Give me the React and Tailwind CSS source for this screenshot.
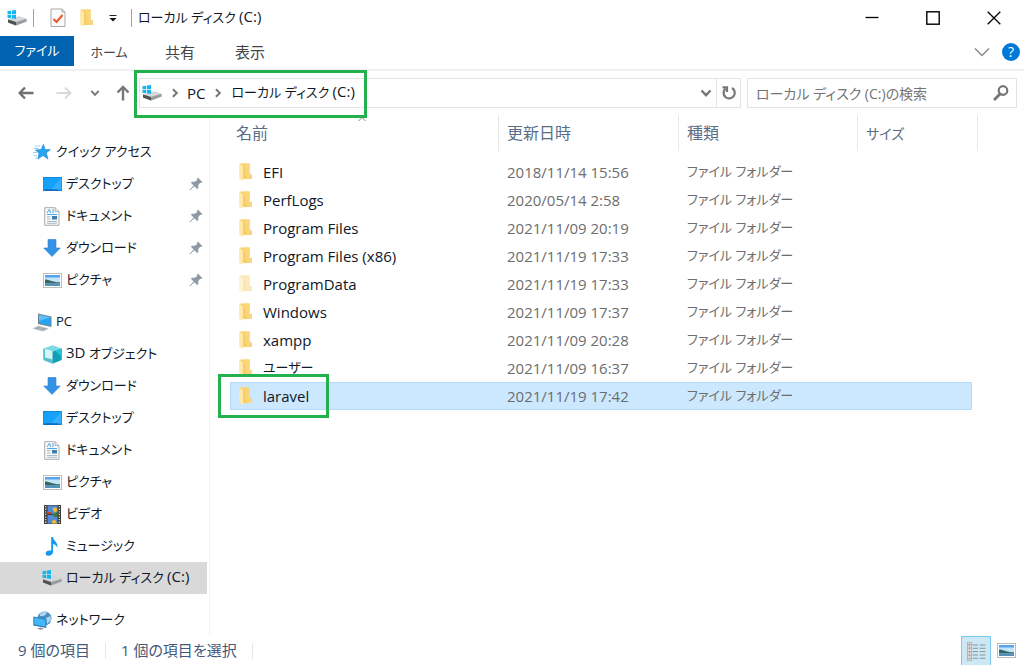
import React from 'react';

const DriveIcon = () => (
  <svg className="w-5 h-4 shrink-0" viewBox="0 0 20 16">
    <path d="M1 9.5 L12 6.5 L19.5 9 L19.5 11.5 L9 15.5 L1 12.5 Z" fill="#a9abad" />
    <path d="M1 9.5 L12 6.5 L19.5 9 L9 12 Z" fill="#d6d8da" />
    <path d="M1 9.5 L9 12 L9 15.5 L1 12.5 Z" fill="#4f5254" />
    <path d="M9 12 L19.5 9 L19.5 11.5 L9 15.5 Z" fill="#9a9da0" />
    <path d="M0.5 1.2 L4 0.7 V4 H0.5 Z M4.8 0.6 L9 0 V4 H4.8 Z M0.5 4.8 H4 V8.2 L0.5 7.7 Z M4.8 4.8 H9 V9 L4.8 8.3 Z" fill="#12b5ef" />
  </svg>
);

const FolderIcon = ({ faded }) => (
  <svg className={`w-[13px] h-[18px] shrink-0 ${faded ? 'opacity-50' : ''}`} viewBox="0 0 13 18">
    <path d="M1 0.5 H10.5 V11 H12.8 V16 H1 Z" fill="#f6cf6c" />
    <path d="M5 0.5 H10.5 V11 H12.8 V16 H8 Z" fill="#fad678" />
    <path d="M0.2 0.8 L4 3 V18 L0.2 15.8 Z" fill="#ffe8a8" />
  </svg>
);

const CheckDocIcon = () => (
  <svg className="w-4 h-5" viewBox="0 0 16 20">
    <path d="M1 1 H12 L15 4 V18.5 H1 Z" fill="#fafafa" stroke="#a9a9a9" />
    <path d="M12 1 V4 H15" fill="none" stroke="#a9a9a9" />
    <path d="M3.5 11 L6.5 14 L12.5 7" fill="none" stroke="#e8562a" strokeWidth="2" />
  </svg>
);

const StarIcon = () => (
  <svg className="w-[18px] h-4" viewBox="0 0 18 16">
    <path d="M10.5 0.3 L12 5.6 H17.3 L13.3 9 L15 15 L10 11.5 L4.8 15 L6 9.3 L2.5 6 L8 5.6 Z" fill="#2aa3ee" stroke="#1884d2" strokeWidth="0.6" />
    <path d="M1.5 2 H7.5 M0.5 4.5 H6 M0 8.5 H4 M0.5 11.5 H4 M2 14 H4" stroke="#9bd6fa" strokeWidth="1" />
  </svg>
);

const DesktopIcon = () => (
  <svg className="w-[19px] h-[14px]" viewBox="0 0 19 14">
    <rect width="19" height="14" fill="#1583d8" />
    <rect x="0.7" y="0.7" width="17.6" height="11.8" fill="#15a0fb" />
    <path d="M18.3 0.7 V12.5 H8 Z" fill="#35afff" />
    <path d="M2 13 H15" stroke="#0b5b9c" />
  </svg>
);

const DocumentIcon = () => (
  <svg className="w-4 h-[19px]" viewBox="0 0 16 19">
    <path d="M0.7 0.7 H11 L15 4.5 V18.3 H0.7 Z" fill="#f7f9fa" stroke="#a8adb1" />
    <path d="M11 0.7 V4.5 H15" fill="#dde1e4" stroke="#a8adb1" strokeWidth="0.8" />
    <path d="M3 6 L5.5 2.2 L6.5 6 M8 3 H10 M8 5 H10 M3 7.5 H13" fill="none" stroke="#4aa9e4" strokeWidth="1" />
    <rect x="8" y="9" width="5" height="3.5" fill="#3c7fae" />
    <path d="M3 9.7 H6.5 M3 12 H6.5 M3 14.5 H13 M3 16.3 H13" stroke="#aebbc6" />
  </svg>
);

const DownloadIcon = () => (
  <svg className="w-[18px] h-[18px]" viewBox="0 0 18 18">
    <path d="M5 0.5 H13 V9 H17.3 L9 17.5 L0.7 9 H5 Z" fill="#3492e6" stroke="#2a83d4" strokeWidth="0.6" />
  </svg>
);

const PictureIcon = () => (
  <svg className="w-[19px] h-[15px]" viewBox="0 0 19 15">
    <rect x="0.5" y="0.5" width="18" height="14" fill="#fff" stroke="#bcbcbc" />
    <rect x="2" y="2" width="15" height="11" fill="#c3e5f8" />
    <rect x="2" y="2" width="15" height="2.5" fill="#5aa2ef" />
    <path d="M2 6.5 C5 6 8 9 17 9.3 V10.5 H2 Z" fill="#386661" />
    <rect x="2" y="10.2" width="15" height="2.8" fill="#5592b8" />
  </svg>
);

const PcIcon = () => (
  <svg className="w-5 h-[19px]" viewBox="0 0 20 19">
    <path d="M6 0.5 L19.5 3.5 V14 L6 11 Z" fill="#6f8390" />
    <path d="M7 1.7 L18.5 4.3 V12.7 L7 10 Z" fill="#28a3f3" />
    <path d="M7 1.7 L18.5 4.3 L7 8 Z" fill="#5fc0fb" />
    <path d="M0.3 15.5 L6.5 12.5 L17 15.5 L10.5 18.5 Z" fill="#c2c7ca" />
    <path d="M3 15.2 L13 17.2 M5 14.2 L15 16.2" stroke="#8d9499" strokeWidth="0.7" />
  </svg>
);

const CubeIcon = () => (
  <svg className="w-[19px] h-[19px]" viewBox="0 0 19 19">
    <path d="M9.5 0.3 L18.7 3.5 L9.5 6.5 L0.3 3.5 Z" fill="#7edbe3" />
    <path d="M0.3 3.5 L9.5 6.5 V18.7 L0.3 15 Z" fill="#d5f5f7" />
    <path d="M0.3 12 L9.5 14.5 V18.7 L0.3 15 Z M0.3 3.5 L2 4.1 V13 L0.3 12.5 Z" fill="#53bfca" />
    <path d="M9.5 6.5 L18.7 3.5 V15 L9.5 18.7 Z" fill="#119fb8" />
    <path d="M12 5.7 L18.7 3.5 V12 Z" fill="#24c0d6" />
  </svg>
);

const VideoIcon = () => (
  <svg className="w-[17px] h-[19px]" viewBox="0 0 17 19">
    <rect width="17" height="19" fill="#3b3b3b" />
    <rect x="3.5" y="0.5" width="10" height="8.5" fill="#5489da" />
    <rect x="3.5" y="10" width="10" height="8.5" fill="#5489da" />
    <path d="M3.5 7 H8 V9 H3.5 Z" fill="#c54827" />
    <path d="M8.5 3 L12.5 2.5 L13.5 6 L10 7.5 Z M8 16 L11 14.5 L13 18.5 H8 Z" fill="#f3bc29" />
    <path d="M9 9 L13 7 V12 H10 Z" fill="#3d7b3f" />
    <path d="M1.7 1 V19 M15.3 1 V19" stroke="#e8e8e8" strokeWidth="1.2" strokeDasharray="1.3 1.3" />
  </svg>
);

const MusicIcon = () => (
  <svg className="w-[14px] h-[19px]" viewBox="0 0 14 19">
    <path d="M6.2 0 H8 C8.3 4 13.5 5 12.3 11 C11.8 8.5 10 7.6 8 7 V15 C8 17.5 5.5 19 3 18.8 C0 18.5 0 15.3 2.3 14 C3.5 13.3 5 13.3 6.2 13.8 Z" fill="#129af0" />
  </svg>
);

const NetworkIcon = () => (
  <svg className="w-[19px] h-[19px]" viewBox="0 0 19 19">
    <circle cx="11.5" cy="7.5" r="7" fill="#4a8fc0" />
    <path d="M7 3 C9 0.5 13 0.8 14 2 L11 5 L7 5 Z M13 7 L17.5 5 L18 9 L14 13 Z" fill="#a9d5ee" />
    <path d="M0.3 5.5 L13.3 8 V17 L0.3 14.5 Z" fill="#2a79b5" />
    <path d="M1.2 6.6 L12.4 8.8 V15.8 L1.2 13.6 Z" fill="#42b6f7" />
    <path d="M4 17.3 L8 16.5 L11 18 L7 18.8 Z" fill="#8c969c" />
  </svg>
);

const PinIcon = () => (
  <svg className="w-[14px] h-[14px]" viewBox="0 0 14 14">
    <path d="M8.8 0.5 L13.5 5.2 L12 6 L11.3 5.8 L9.3 8 L9.3 11 L8.2 12 L5.3 9.2 L0.8 13.4 L0.4 13 L4.6 8.5 L1.9 5.8 L3 4.7 L6 4.7 L8.3 2.7 L8 1.6 Z" fill="#8e99a3" />
  </svg>
);

const Chevron = ({ className }) => (
  <svg className={className} viewBox="0 0 12 12" fill="none" stroke="currentColor" strokeWidth="2.4">
    <path d="M1.5 3.5 L6 8.2 L10.5 3.5" />
  </svg>
);

// Latin parts are set a little larger than the kana beside them
const DriveLabel = () => (
  <>
    ローカル ディスク <span className="text-[15px] leading-none">(C:)</span>
  </>
);

const quickAccess = [
  { id: 'desktop', label: 'デスクトップ', Icon: DesktopIcon },
  { id: 'documents', label: 'ドキュメント', Icon: DocumentIcon },
  { id: 'downloads', label: 'ダウンロード', Icon: DownloadIcon },
  { id: 'pictures', label: 'ピクチャ', Icon: PictureIcon },
];

const pcItems = [
  { id: 'objects', label: <><span className="text-[15px] leading-none">3D</span> オブジェクト</>, Icon: CubeIcon },
  { id: 'downloads', label: 'ダウンロード', Icon: DownloadIcon },
  { id: 'desktop', label: 'デスクトップ', Icon: DesktopIcon },
  { id: 'documents', label: 'ドキュメント', Icon: DocumentIcon },
  { id: 'pictures', label: 'ピクチャ', Icon: PictureIcon },
  { id: 'videos', label: 'ビデオ', Icon: VideoIcon },
  { id: 'music', label: 'ミュージック', Icon: MusicIcon },
  { id: 'drive', label: <DriveLabel />, Icon: DriveIcon, selected: true },
];

const files = [
  { name: 'EFI', date: '2018/11/14 15:56' },
  { name: 'PerfLogs', date: '2020/05/14 2:58' },
  { name: 'Program Files', date: '2021/11/09 20:19' },
  { name: 'Program Files (x86)', date: '2021/11/19 17:33' },
  { name: 'ProgramData', date: '2021/11/19 17:33', faded: true },
  { name: 'Windows', date: '2021/11/09 17:37' },
  { name: 'xampp', date: '2021/11/09 20:28' },
  { name: 'ユーザー', date: '2021/11/09 16:37', kana: true },
  { name: 'laravel', date: '2021/11/19 17:42', selected: true },
];

const TitleBar = () => (
  <header className="flex h-9 items-center pl-[7px]">
    <DriveIcon />
    <span className="ml-1.5 h-[18px] w-px bg-gray-400" />
    <button className="ml-4" aria-label="プロパティ"><CheckDocIcon /></button>
    <button className="ml-3.5" aria-label="新しいフォルダー"><FolderIcon /></button>
    <button className="ml-4" aria-label="カスタマイズ">
      <svg className="w-2 h-[18px]" viewBox="0 0 8 18">
        <path d="M0.5 6.5 H7.5" stroke="#222" />
        <path d="M0.5 9 H7.5 L4 12.5 Z" fill="#111" />
      </svg>
    </button>
    <span className="ml-3.5 h-[18px] w-px bg-gray-400" />
    <h1 className="ml-1.5 flex-1 text-[13px]"><DriveLabel /></h1>
    <button className="flex h-9 w-[61px] items-center justify-center" aria-label="最小化">
      <svg className="w-[14px] h-[14px]" viewBox="0 0 14 14"><path d="M0.5 6.5 H13.5" stroke="#000" strokeWidth="1.3" /></svg>
    </button>
    <button className="flex h-9 w-[61px] items-center justify-center" aria-label="最大化">
      <svg className="w-[14px] h-[14px]" viewBox="0 0 14 14"><rect x="0.8" y="0.8" width="12.4" height="12.4" fill="none" stroke="#000" strokeWidth="1.4" /></svg>
    </button>
    <button className="flex h-9 w-[61px] items-center justify-center" aria-label="閉じる">
      <svg className="w-[14px] h-[14px]" viewBox="0 0 14 14"><path d="M0.7 0.7 L13.3 13.3 M13.3 0.7 L0.7 13.3" stroke="#000" strokeWidth="1.3" /></svg>
    </button>
  </header>
);

const Ribbon = () => (
  <div className="flex items-start border-b-2 border-[#f0f0f0] text-[#444]">
    <button className="h-[30px] w-[74px] bg-[#0063b1] text-[13px] text-white">ファイル</button>
    <button className="h-[33px] w-[70px] text-[13px]">ホーム</button>
    <button className="h-[33px] w-[72px] text-[15px]">共有</button>
    <button className="h-[33px] w-[68px] text-[15px]">表示</button>
    <div className="ml-auto flex h-8 items-center gap-3 pr-1">
      <button aria-label="リボンの展開">
        <svg className="w-4 h-4" viewBox="0 0 16 16" fill="none" stroke="#8a8a8a" strokeWidth="1.5">
          <path d="M1 4.5 L8 11.5 L15 4.5" />
        </svg>
      </button>
      <button className="h-[18px] w-[18px] rounded-full bg-[#0078d7] text-[14px] leading-[18px] text-white">?</button>
    </div>
  </div>
);

const NavBar = () => (
  <div className="flex items-center p-[7px] text-[#777]">
    <button className="flex w-[38px] justify-center" aria-label="戻る">
      <svg className="w-4 h-4" viewBox="0 0 16 16" fill="none" stroke="#707070" strokeWidth="2.4">
        <path d="M15.5 8 H2 M7 2.5 L1.7 8 L7 13.5" />
      </svg>
    </button>
    <button className="flex w-[38px] justify-center" aria-label="進む">
      <svg className="w-4 h-4" viewBox="0 0 16 16" fill="none" stroke="#dadada" strokeWidth="2">
        <path d="M0.5 8 H14 M9 2.5 L14.5 8 L9 13.5" />
      </svg>
    </button>
    <button className="flex w-6 justify-center" aria-label="履歴"><Chevron className="w-[10px] h-[10px]" /></button>
    <button className="flex w-8 justify-center" aria-label="上へ">
      <svg className="w-4 h-4" viewBox="0 0 16 16" fill="none" stroke="#777" strokeWidth="2.4">
        <path d="M8 15.5 V2 M2.5 7.5 L8 2 L13.5 7.5" />
      </svg>
    </button>
    <div className="flex h-[30px] flex-1 items-center border border-[#e4e4e4]">
      <nav className="relative flex h-full items-center pl-0.5 pr-2 text-gray-900">
        <DriveIcon />
        <Chevron className="ml-2 w-[10px] h-[10px] -rotate-90 text-[#777]" />
        <a href="#pc" className="ml-[7px] text-[15px]">PC</a>
        <Chevron className="ml-2 w-[10px] h-[10px] -rotate-90 text-[#777]" />
        <a href="#c" className="ml-2 text-[13px]"><DriveLabel /></a>
        <span className="pointer-events-none absolute -top-[9px] -bottom-[11px] -left-1.5 -right-1 z-10 border-[3px] border-[#22b14c]" />
      </nav>
      <button className="ml-auto flex w-5 justify-center" aria-label="以前の場所"><Chevron className="w-3 h-3" /></button>
      <button className="flex h-full w-6 items-center justify-center border-l border-[#e4e4e4]" aria-label="更新">
        <svg className="w-4 h-4" viewBox="0 0 16 16" fill="none" stroke="#777" strokeWidth="2.2">
          <path d="M11 3 A5.6 5.6 0 1 1 4.5 3.6" />
          <path d="M1.5 2.3 H6 V7" />
        </svg>
      </button>
    </div>
    <label className="ml-1.5 flex h-[30px] w-[270px] items-center border border-[#e4e4e4] pl-2 pr-1.5">
      <input
        type="text"
        aria-label="検索"
        placeholder="ローカル ディスク (C:)の検索"
        className="min-w-0 flex-1 text-[14px] placeholder:text-[#757575] outline-none"
      />
      <svg className="w-[18px] h-[18px]" viewBox="0 0 18 18" fill="none" stroke="#757575">
        <circle cx="11" cy="6.5" r="4.3" strokeWidth="2.2" />
        <path d="M8 10 L2 16" strokeWidth="2.8" />
      </svg>
    </label>
  </div>
);

const SidebarRow = ({ label, Icon, root, pinned, selected }) => (
  <a
    href="#open"
    className={`mr-0.5 flex h-8 items-center gap-1 text-[13px] text-gray-900 ${root ? 'pl-8' : 'pl-[42px]'} ${selected ? 'bg-[#d9d9d9]' : ''}`}
  >
    <span className="flex w-5 justify-center">
      <Icon />
    </span>
    <span className="flex-1 whitespace-nowrap">{label}</span>
    {pinned && <span className="pr-1"><PinIcon /></span>}
  </a>
);

const Sidebar = () => (
  <aside className="w-[210px] shrink-0 border-r border-[#f3f3f3]">
    <div className="flex flex-col gap-2.5 pt-[21px]">
      <div>
        <SidebarRow label="クイック アクセス" Icon={StarIcon} root />
        {quickAccess.map(({ id, ...item }) => (
          <SidebarRow key={id} {...item} pinned />
        ))}
      </div>
      <div>
        <SidebarRow label="PC" Icon={PcIcon} root />
        {pcItems.map(({ id, ...item }) => (
          <SidebarRow key={id} {...item} />
        ))}
      </div>
      <SidebarRow label="ネットワーク" Icon={NetworkIcon} root />
    </div>
  </aside>
);

const FileTable = () => (
  <main className="relative flex-1 pl-5">
    <table className="w-[748px] table-fixed border-separate border-spacing-0 text-left">
      <colgroup>
        <col className="w-[269px]" />
        <col className="w-[180px]" />
        <col className="w-[179px]" />
        <col className="w-[114px]" />
        <col className="w-[6px]" />
      </colgroup>
      <thead className="text-[16px] text-[#5a6e86]">
        <tr className="h-9">
          <th className="relative border-r border-[#e8e8e8] pl-1.5 font-normal">
            名前
            <svg className="absolute top-0.5 left-32 w-2 h-1" viewBox="0 0 8 4" fill="none" stroke="#888">
              <path d="M0.5 4 L4 0.5 L7.5 4" />
            </svg>
          </th>
          <th className="border-r border-[#e8e8e8] pl-2 font-normal">更新日時</th>
          <th className="border-r border-[#e8e8e8] pl-2 font-normal">種類</th>
          <th className="pl-2 text-[14px] font-normal">サイズ</th>
          <th className="border-r border-[#e8e8e8]" />
        </tr>
      </thead>
      <tbody>
        <tr className="h-[7px]" />
        {files.map((file) => {
          const cell = file.selected ? 'border-y border-[#b3dafa] bg-[#cce8ff]' : '';
          return (
            <tr key={file.name} className="h-7">
              <td className={`${cell} ${file.selected ? 'border-l pl-2' : 'pl-[9px]'}`}>
                <div className="relative flex items-center gap-[11px]">
                  <FolderIcon faded={file.faded} />
                  <span className={`text-gray-900 ${file.kana ? 'text-[13px]' : 'text-[15px]'}`}>{file.name}</span>
                  {file.selected && (
                    <span className="pointer-events-none absolute -top-[11px] -left-[21px] h-11 w-[111px] border-[3px] border-[#22b14c]" />
                  )}
                </div>
              </td>
              <td className={`pl-2 text-[15px] text-[#6d6d6d] ${cell}`}>{file.date}</td>
              <td className={`pl-2 text-[13px] text-[#6d6d6d] ${cell}`}>ファイル フォルダー</td>
              <td className={`${cell} ${file.selected ? 'border-r' : ''}`} />
            </tr>
          );
        })}
      </tbody>
    </table>
  </main>
);

const StatusBar = () => (
  <footer className="flex h-[29px] items-center pl-[18px] pr-2 text-[15px] text-[#43587a]">
    <span>9 個の項目</span>
    <span className="mx-[15px] h-4 w-px bg-gray-200" />
    <span>1 個の項目を選択</span>
    <span className="mx-[15px] h-4 w-px bg-gray-200" />
    <div className="ml-auto flex h-full items-center gap-1.5">
      <button className="flex h-full w-[30px] items-center justify-center border border-b-0 border-[#7cc8f0] bg-[#cce8f5]" aria-label="詳細">
        <svg className="w-[19px] h-[19px]" viewBox="0 0 19 19">
          <rect x="0.5" y="0.5" width="4" height="18" fill="#d7d7d7" stroke="#b5b5b5" />
          <path d="M2.5 2 V17" stroke="#b78455" strokeWidth="1.5" strokeDasharray="1.5 2" />
          <path d="M5.5 3 H11 M5.5 6.3 H11 M5.5 9.6 H11 M5.5 13 H11 M5.5 16.3 H11 M12.5 3 H18.5 M12.5 6.3 H18.5 M12.5 9.6 H18.5 M12.5 13 H18.5 M12.5 16.3 H18.5" stroke="#8b9499" />
        </svg>
      </button>
      <button aria-label="大アイコン"><PictureIcon /></button>
    </div>
  </footer>
);

const App = () => (
  <div className="flex min-h-screen flex-col bg-white font-['Open_Sans','Noto_Sans_CJK_JP',sans-serif] text-gray-900 [font-feature-settings:'palt']">
    <TitleBar />
    <Ribbon />
    <NavBar />
    <div className="flex flex-1">
      <Sidebar />
      <FileTable />
    </div>
    <StatusBar />
  </div>
);

export default App;
